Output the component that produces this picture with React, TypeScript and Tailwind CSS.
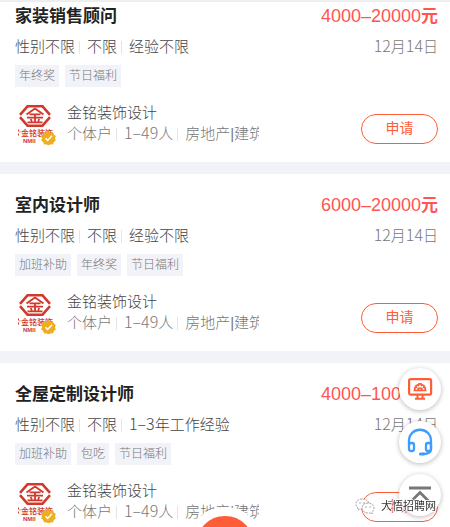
import { Fragment } from "react";

type Job = {
  title: string;
  pay: string;
  date: string;
  needs: string[];
  perks: string[];
};

const jobs: Job[] = [
  { title: "家装销售顾问", pay: "4000–20000", date: "12月14日", needs: ["性别不限", "不限", "经验不限"], perks: ["年终奖", "节日福利"] },
  { title: "室内设计师", pay: "6000–20000", date: "12月14日", needs: ["性别不限", "不限", "经验不限"], perks: ["加班补助", "年终奖", "节日福利"] },
  { title: "全屋定制设计师", pay: "4000–10000", date: "12月14日", needs: ["性别不限", "不限", "1–3年工作经验"], perks: ["加班补助", "包吃", "节日福利"] },
];

const company = ["个体户", "1–49人", "房地产|建筑装饰"];

/* Digits are set one size larger than the Chinese text around them. */
function Mixed({ text }: { text: string }) {
  return (
    <>
      {text.split(/([\d–]+)/).map((part, i) =>
        i % 2 ? <span key={i} className="font-['Noto_Sans_CJK_SC',sans-serif] text-[16px] leading-none">{part}</span> : <Fragment key={i}>{part}</Fragment>,
      )}
    </>
  );
}

function Divided({ items }: { items: string[] }) {
  return (
    <>
      {items.map((item, i) => (
        <span key={item} className={i ? "ml-1 flex items-center" : "flex items-center"}>
          {i > 0 && <i className="mr-[7px] h-[13px] w-px bg-[#e4e4e4]" />}
          <span><Mixed text={item} /></span>
        </span>
      ))}
    </>
  );
}

function Logo() {
  return (
    <svg viewBox="0 0 42 42" className="h-[42px] w-[42px] shrink-0" aria-label="金铭装饰">
      <g fill="none" stroke="#d0392b">
        <path d="M5 11.8 12.500 3.300h15L35 11.800" strokeWidth="2.500" />
        <path d="M5 14.200 12.500 22.700h15L35 14.200" strokeWidth="2.500" />
        <path d="M20 5.500 11.500 11.500M20 5.500 28.500 11.500M14.500 11.300h11M12 14.600h16M20 11v8.500M15.800 16l1 2.500M24.200 16l-1 2.500M12.500 19.300h15" strokeWidth="1.800" />
      </g>
      <path d="M3.500 26.500v2M3.500 30.500v2M5 28.500v1" stroke="#d0392b" strokeWidth="1" />
      <text x="6" y="32.500" fontSize="8" fontWeight="500" fill="#d0392b" fontFamily="Noto Sans CJK SC, sans-serif">金铭装饰</text>
      <text x="8" y="39.500" fontSize="6" fontWeight="700" fill="#d0392b" fontFamily="Liberation Sans, sans-serif">NMII</text>
      <path d="m33.500 28.700 2 1.500 2.500-.2.800 2.400 2 1.400-.8 2.300.8 2.300-2 1.500-.8 2.300-2.500-.1-2 1.500-2-1.500-2.500.1-.8-2.300-2-1.500.8-2.300-.8-2.300 2-1.400.8-2.400 2.500.2z" transform="translate(0 -.8)" fill="#efad20" />
      <path d="m30.500 35.200 2.200 2.200 4.300-4.600" fill="none" stroke="#fff" strokeWidth="1.500" />
    </svg>
  );
}

function JobCard({ job, first }: { job: Job; first: boolean }) {
  return (
    <article className={`${first ? "pt-0.5" : "pt-[19px]"} bg-white pr-3 pb-[17px] pl-[15px]`}>
      <div className="flex items-center justify-between leading-6">
        <h2 className="text-[17px] font-bold text-[#222]">{job.title}</h2>
        <p className="text-[18px] text-[#ff5552]">
          {job.pay}
          <span className="text-[17px] font-bold">元</span>
        </p>
      </div>
      <div className="mt-[7px] flex justify-between text-[15px] leading-[22px] font-light">
        <p className="flex text-[#444]"><Divided items={job.needs} /></p>
        <time className="text-[#777]"><Mixed text={job.date} /></time>
      </div>
      <ul className="mt-[7px] flex gap-1.5 text-[12px] leading-[22px] font-light text-[#777]">
        {job.perks.map((perk) => <li key={perk} className="bg-[#f2f3f9] px-1">{perk}</li>)}
      </ul>
      <div className="mt-4 flex h-[42px] items-start">
        <Logo />
        <div className="ml-[10px] w-[192px] text-[15px] font-light">
          <p className="leading-5 text-[#444]">金铭装饰设计</p>
          <p className="flex overflow-hidden leading-[22px] whitespace-nowrap text-[#777]"><Divided items={company} /></p>
        </div>
        <button type="button" className="mt-[11px] ml-auto h-[30px] w-[77px] rounded-full border border-[#ff5c38] pb-0.5 text-[14px] leading-[26px] text-[#ff5c38]">申请</button>
      </div>
    </article>
  );
}

const round = "flex h-[42px] w-[42px] items-center justify-center rounded-full bg-white shadow-[0_1px_5px_rgba(0,0,0,0.28)]";

export default function App() {
  return (
    <main className="relative h-screen overflow-hidden border-t-2 border-[#eee] bg-[#f2f3f9] font-['Liberation_Sans','Noto_Sans_CJK_SC',sans-serif]">
      <div className="flex flex-col gap-3">
        {jobs.map((job, i) => <JobCard key={job.title} job={job} first={i === 0} />)}
      </div>

      <button type="button" aria-label="发布" className="fixed -bottom-14 left-1/2 h-[76px] w-[76px] -translate-x-1/2 rounded-full border-[9px] border-white bg-[#ff5c38]" />

      <nav className="fixed right-[9px] bottom-[11px] flex flex-col gap-[11px]">
        <button type="button" aria-label="电脑版" className={round}>
          <svg viewBox="0 0 26 26" className="h-[26px] w-[26px]" fill="none" stroke="#ff5c38" strokeWidth="2.200">
            <rect x="2.100" y="3.100" width="22" height="15.500" rx="1.500" />
            <path d="M10.500 18.500v4M15.500 18.500v4M8 22.800h10" strokeWidth="2" />
            <path d="M6.500 14.500h13M7.800 14v-2.500h1.700l-.5-1.800 1.800-.7.700.3.500-1.500h2l.500 1.500.7-.3 1.800.7-.5 1.800h1.700V14M11 14c0-2.600 4-2.600 4 0" strokeWidth="1.700" />
          </svg>
        </button>
        <button type="button" aria-label="客服" className={round}>
          <svg viewBox="0 0 28 30" className="h-[30px] w-[28px]" fill="none" stroke="#3c9cff" strokeWidth="2.300">
            <path d="M3 18v-4C3 -1 25 -1 25 14v8c0 3-3 5-8 5" />
            <rect x="3" y="16" width="5" height="8" rx="2" />
            <rect x="20" y="16" width="5" height="8" rx="2" />
            <path d="M14.500 27h3" strokeWidth="3.200" strokeLinecap="round" />
          </svg>
        </button>
        <button type="button" aria-label="回到顶部" className={round}>
          <svg viewBox="0 0 24 24" className="h-6 w-6" fill="none" stroke="#777" strokeWidth="2.800">
            <path d="M1 5h22M2.500 19l9.500-9.500 9.500 9.500" />
          </svg>
        </button>
      </nav>

      <div className="pointer-events-none fixed right-[14px] bottom-[13px] flex items-center gap-1.5 text-[11px] leading-4 text-[#333]">
        <svg viewBox="0 0 20 16" className="h-4 w-5" fill="#fff" stroke="#888" strokeWidth="0.800" strokeDasharray="2 1">
          <path d="M7 1C3 1 1 3.500 1 6c0 2 1 3 2 4v2l2-1h3c4 0 6-2 6-5S11 1 7 1Z" />
          <path d="M13 5c-4 0-6 2-6 5s3 5 6 5h2l2 1v-2c1-1 2-2 2-4 0-3-3-5-6-5Z" />
          <path d="M5 4.500v1M9 4.500v1M11 8.500v1M15 8.500v1" strokeWidth="1.300" />
        </svg>
        <span className="[text-shadow:1px_0_#fff,-1px_0_#fff,0_1px_#fff,0_-1px_#fff]">大悟招聘网</span>
      </div>
    </main>
  );
}
